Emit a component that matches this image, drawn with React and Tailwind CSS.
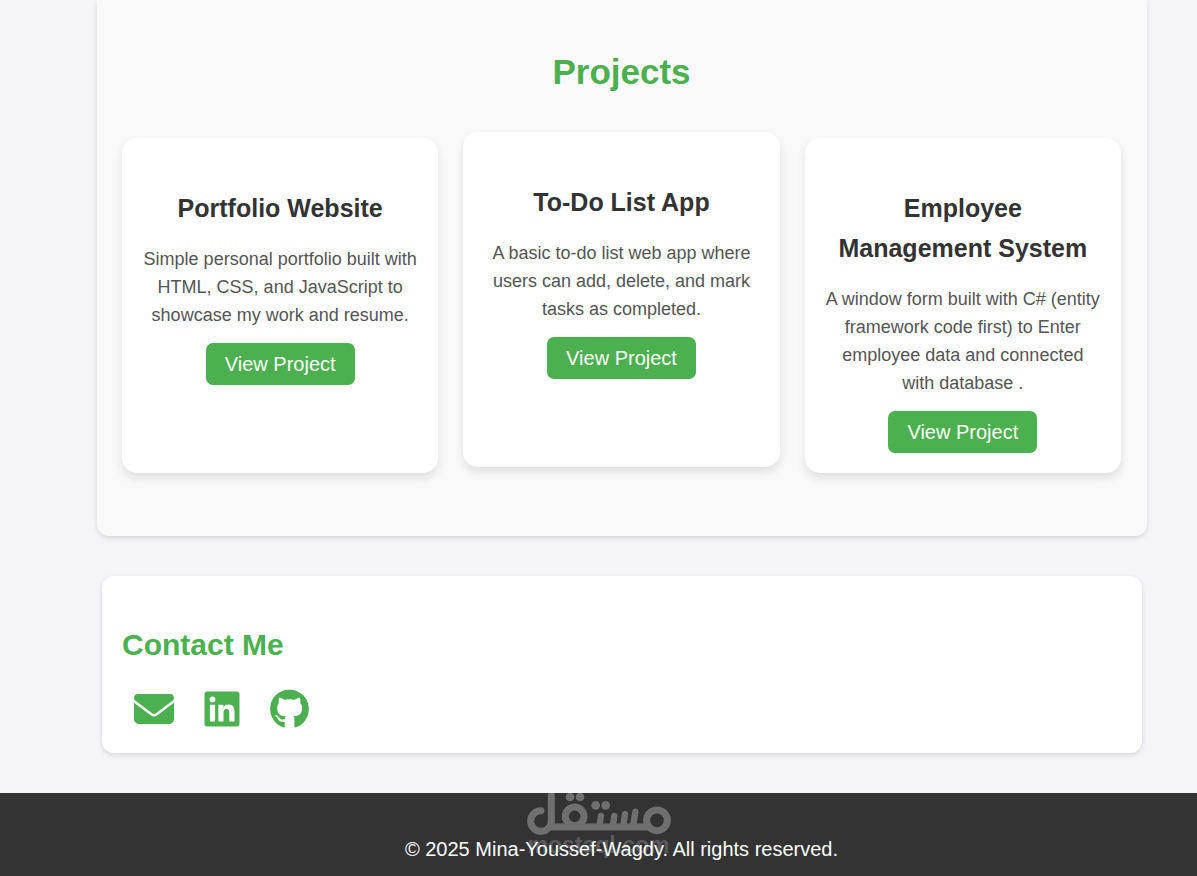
import React from "react";
import { FaEnvelope, FaGithub, FaLinkedin } from "react-icons/fa6";

const projects = [
  {
    title: "Portfolio Website",
    text: "Simple personal portfolio built with HTML, CSS, and JavaScript to showcase my work and resume.",
  },
  {
    title: "To-Do List App",
    text: "A basic to-do list web app where users can add, delete, and mark tasks as completed.",
    raised: true,
  },
  {
    title: "Employee Management System",
    text: "A window form built with C# (entity framework code first) to Enter employee data and connected with database .",
  },
];

const contacts = [
  { label: "Email", href: "#email", Icon: FaEnvelope, size: "w-[40px]" },
  { label: "LinkedIn", href: "#linkedin", Icon: FaLinkedin, size: "w-[36px]" },
  { label: "GitHub", href: "#github", Icon: FaGithub, size: "w-[39px]" },
];

function ProjectCard({ title, text, raised }) {
  return (
    <article
      className={`flex flex-col items-center rounded-[15px] bg-white px-5 pt-[50px] pb-5 text-center shadow-[0_5px_10px_rgba(0,0,0,0.1)] ${
        raised ? "-translate-y-1.5" : ""
      }`}
    >
      <h3 className="text-[25px] leading-10 font-bold text-[#333]">{title}</h3>
      <p className="mt-[17px] text-[18px] leading-7 text-[#555]">{text}</p>
      <a
        href="#project"
        className="mt-[14px] rounded-[7px] bg-[#4caf50] px-[19px] py-[5px] text-[20px] leading-8 text-white"
      >
        View Project
      </a>
    </article>
  );
}

function Watermark() {
  return (
    <div className="pointer-events-none absolute inset-x-0 top-0 flex flex-col items-center">
      <svg viewBox="78 50 432 126" className="h-[42px] w-36" fill="none" stroke="#6f6f6f" strokeWidth="21" strokeLinecap="round" aria-hidden="true">
        <path d="M120 103 A31 31 0 1 0 151 133 V58" />
        <path d="M151 152 H446" strokeLinecap="butt" />
        <circle cx="468" cy="132" r="31" />
        <circle cx="221" cy="120" r="28" />
        <path d="M403 106 L397 146 M372 113 L367 146 M340 119 L336 146 M300 119 L296 146" strokeWidth="19" />
        <g fill="#6f6f6f" stroke="none">
          <circle cx="207" cy="62" r="13" />
          <circle cx="237" cy="62" r="13" />
          <circle cx="284" cy="87" r="13" />
          <circle cx="314" cy="87" r="13" />
        </g>
      </svg>
      <span className="text-[23px] leading-5 font-bold text-[#5a5a5e]">mostaql.com</span>
    </div>
  );
}

export default function App() {
  return (
    <div className="flex min-h-screen flex-col bg-[#f4f4f9] font-['Liberation_Sans',Arial,sans-serif]">
      <main className="pr-[50px] pl-[97px]">
        <section className="rounded-b-[12px] bg-[#f9f9f9] pt-11 pr-[26px] pb-[63px] pl-[25px] shadow-[0_2px_5px_rgba(0,0,0,0.12)]">
          <h2 className="text-center text-[35px] leading-[56px] font-bold text-[#4caf50]">Projects</h2>
          <div className="mt-[38px] grid grid-cols-3 gap-[25px]">
            {projects.map((project) => (
              <ProjectCard key={project.title} {...project} />
            ))}
          </div>
        </section>

        <section className="mx-[5px] my-10 rounded-[12px] bg-white px-5 pt-[45px] pb-6 shadow-[0_2px_5px_rgba(0,0,0,0.12)]">
          <h2 className="text-[30px] leading-[48px] font-bold text-[#4caf50]">Contact Me</h2>
          <div className="mt-5 flex gap-[30px] pl-3">
            {contacts.map(({ label, href, Icon, size }) => (
              <a key={label} href={href} aria-label={label} className="text-[#4caf50]">
                <Icon className={`h-10 ${size}`} />
              </a>
            ))}
          </div>
        </section>
      </main>

      <footer className="relative flex-1 bg-[#333] pt-10 pl-[46px] text-center">
        <Watermark />
        <p className="relative text-[20px] leading-8 text-white">
          © 2025 Mina-Youssef-Wagdy. All rights reserved.
        </p>
      </footer>
    </div>
  );
}
